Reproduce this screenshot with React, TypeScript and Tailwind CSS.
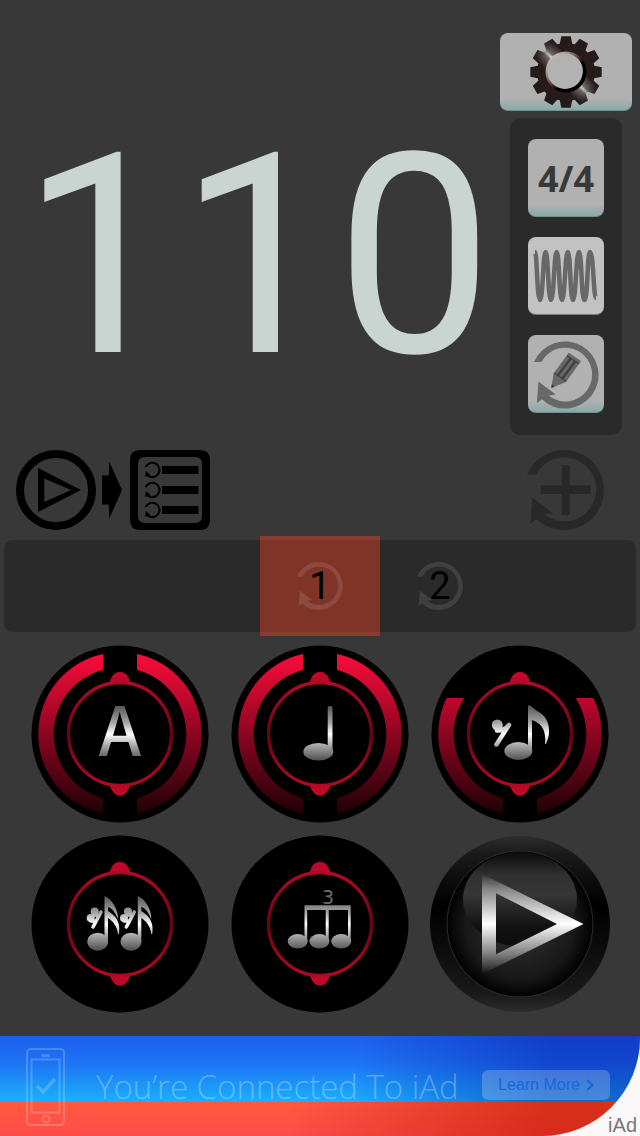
import { useId } from "react";
import type { ReactNode } from "react";

const LOOP_PATH =
  "M-36.9-15.5A40 40 0 1 1-27.6 29L-33.6 33.7L-31.6 7.7L-11 23.3L-19.6 24.5A32 32 0 1 0-28-15.5Z";

const GEAR_POINTS = Array.from({ length: 12 }, (_, i) => {
  const at = (radius: number, degrees: number) => {
    const a = ((i * 30 + degrees - 90) * Math.PI) / 180;
    return `${(radius * Math.cos(a)).toFixed(2)},${(radius * Math.sin(a)).toFixed(2)}`;
  };
  return [at(29, -12.5), at(36, -7.5), at(36, 7.5), at(29, 12.5)].join(" ");
}).join(" ");

function Gear() {
  return (
    <svg viewBox="-38 -39 76 77" className="h-[77px] w-[76px]" aria-hidden="true">
      <defs>
        <linearGradient id="gear-shine" gradientUnits="userSpaceOnUse" x1="9" y1="-9" x2="-9" y2="9">
          <stop offset="0" stopColor="#fff" stopOpacity="0" />
          <stop offset="0.4" stopColor="#fff" stopOpacity="0.4" />
          <stop offset="0.5" stopColor="#fff" stopOpacity="0.9" />
          <stop offset="0.6" stopColor="#fff" stopOpacity="0.4" />
          <stop offset="1" stopColor="#fff" stopOpacity="0" />
        </linearGradient>
        <radialGradient id="gear-fade" gradientUnits="userSpaceOnUse" cx="0" cy="0" r="36">
          <stop offset="0.5" stopColor="#fff" />
          <stop offset="0.75" stopColor="#bbb" />
          <stop offset="1" stopColor="#222" />
        </radialGradient>
        <mask id="gear-mask" maskUnits="userSpaceOnUse" x="-38" y="-38" width="76" height="76">
          <circle r="38" fill="url(#gear-fade)" />
        </mask>
        <linearGradient id="gear-rim" x1="0" y1="0" x2="1" y2="1">
          <stop offset="0" stopColor="#fff" />
          <stop offset="0.4" stopColor="#80594d" />
          <stop offset="0.6" stopColor="#000" />
        </linearGradient>
      </defs>
      <polygon points={GEAR_POINTS} fill="#261b1b" />
      <polygon points={GEAR_POINTS} fill="url(#gear-shine)" mask="url(#gear-mask)" />
      <circle r="20.500" fill="url(#gear-rim)" />
      <circle r="17.800" cx="-0.900" cy="-0.900" fill="#b2b2b2" />
    </svg>
  );
}

function Wave() {
  return (
    <svg viewBox="0 0 76 77" className="h-[77px] w-[76px]" fill="none" aria-hidden="true">
      <path
        d="M7 15C9 15 9 63 12 63S15 15 17.6 15S20 63 23 63S26 15 28.7 15S31 63 34 63S37 15 39.8 15S42 63 45 63S48 15 51 15S53 63 56.5 63S59 15 62 15C65.500 15 65.500 61 68 61"
        stroke="#686868"
        strokeWidth="4.500"
      />
    </svg>
  );
}

function Pencil() {
  return (
    <svg viewBox="-37 -40 76 77" className="h-[77px] w-[76px]" aria-hidden="true">
      <path d={LOOP_PATH} transform="scale(0.84)" fill="#686868" />
      <path d="M3.700-22.300L16-14L1 7L-13.700 13L-11.300-1.700Z" fill="#686868" />
      <path d="M2-19L14-11.300M-10.500-2L1 6.500" stroke="#404040" strokeWidth="1.200" />
      <path d="M6-17L-7.500 1M10.500-14L-3 4" stroke="#404040" strokeWidth="2.200" />
      <path d="M-13.700 13L-13.200 9.500L-10.500 11.500Z" fill="#303030" />
    </svg>
  );
}

function PlayList() {
  return (
    <svg viewBox="16 450 194 80" className="h-20 w-[194px]" aria-hidden="true">
      <circle cx="56" cy="490" r="36" fill="none" stroke="#000" strokeWidth="8" />
      <path
        fillRule="evenodd"
        d="M38 468L81 490L38 512ZM44.300 478.500V502L71 490Z"
      />
      <path d="M102 475.500H108.700L109.300 461.700L122 490L109.300 518.500L108.700 504.500H102Z" />
      <path
        fillRule="evenodd"
        d="M140 450H200Q210 450 210 460V520Q210 530 200 530H140Q130 530 130 520V460Q130 450 140 450ZM145 457Q138 457 138 464V516Q138 523 145 523H195Q202 523 202 516V464Q202 457 195 457Z"
      />
      {[470, 490, 510].map((y) => (
        <g key={y}>
          <path d={LOOP_PATH} transform={`translate(152.300 ${y}) scale(0.2)`} stroke="#000" strokeWidth="2.500" />
          <rect x="162" y={y - 4} width="36.500" height="8" />
        </g>
      ))}
    </svg>
  );
}

function LoopPlus() {
  return (
    <svg viewBox="-38 -40 78 80" className="h-20 w-[78px]" fill="#282828" aria-hidden="true">
      <path d={LOOP_PATH} />
      <path d="M-2.300-25H5.700V-4.700H26.700V4H5.700V25H-2.300V4H-23.300V-4.700H-2.300Z" />
    </svg>
  );
}

function ToolButton({ label, plain, children }: { label: string; plain?: boolean; children: ReactNode }) {
  const face = plain
    ? "bg-[#c2c2c2] border-b-[#71807f]"
    : "bg-linear-to-b from-[#b1b1b1] from-85% to-[#86aaaa] border-b-[#71908f]";
  return (
    <button
      type="button"
      aria-label={label}
      className={`flex min-h-[77px] w-full items-center justify-center overflow-hidden rounded-lg border-b ${face}`}
    >
      {children}
    </button>
  );
}

function Track({ number, selected }: { number: number; selected?: boolean }) {
  return (
    <button
      type="button"
      className={`relative -my-1 flex h-[100px] w-[120px] items-center justify-center ${
        selected ? "bg-[rgba(244,67,40,0.43)]" : ""
      }`}
    >
      <svg
        viewBox="-38 -40 80 80"
        className={`h-12 w-12 ${selected ? "fill-[#8d4a40]" : "fill-[#404040]"}`}
        aria-hidden="true"
      >
        <path d={LOOP_PATH} />
      </svg>
      <span className="absolute inset-0 text-center text-[38px] leading-[100px]">{number}</span>
    </button>
  );
}

type Level = "full" | "partial" | "off";

function Dial({ label, level, glyph }: { label: string; level: Level; glyph: (fill: string) => ReactNode }) {
  const id = useId().replace(/[^a-zA-Z0-9]/g, "");
  const metal = `url(#${id}m)`;
  const red = `url(#${id}r)`;
  return (
    <button type="button" aria-label={label} className="rounded-full">
      <svg viewBox="-90 -90 180 180" className="h-[180px] w-[180px]" aria-hidden="true">
        <defs>
          <linearGradient id={`${id}m`} gradientUnits="userSpaceOnUse" x1="0" y1="-27" x2="0" y2="25">
            <stop offset="0" stopColor="#5c5a5a" />
            <stop offset="0.3" stopColor="#a4a4a4" />
            <stop offset="0.52" stopColor="#fff" />
            <stop offset="0.74" stopColor="#a8a8a8" />
            <stop offset="1" stopColor="#595656" />
          </linearGradient>
          <linearGradient id={`${id}r`} gradientUnits="userSpaceOnUse" x1="0" y1="-80" x2="0" y2="80">
            <stop offset="0" stopColor="#fa0c3a" />
            <stop offset="1" stopColor="#1e0006" />
          </linearGradient>
          <linearGradient id={`${id}i`} gradientUnits="userSpaceOnUse" x1="0" y1="-54" x2="0" y2="54">
            <stop offset="0" stopColor="#b50927" />
            <stop offset="0.5" stopColor="#640416" />
            <stop offset="1" stopColor="#b50927" />
          </linearGradient>
          <clipPath id={`${id}c`}>
            <rect x="-90" y={level === "partial" ? -36 : -90} width="180" height="180" />
          </clipPath>
        </defs>
        <circle r="88.500" fill="#000" />
        {level !== "off" && (
          <g clipPath={`url(#${id}c)`} fill={red}>
            <path d="M-17-80A81.800 81.800 0 0 0-17 80V64A66.200 66.200 0 0 1-17-64Z" />
            <path d="M17-80A81.800 81.800 0 0 1 17 80V64A66.200 66.200 0 0 0 17-64Z" />
          </g>
        )}
        <path d="M-11-50C-9-55-8-62 0-62S9-55 11-50Z" fill="#bd0829" />
        <path d="M-11 50C-9 54-7 61.700 0 61.700S9 54 11 50Z" fill="#bd0829" />
        <circle r="51.500" fill="#000" stroke={`url(#${id}i)`} strokeWidth="3.400" />
        {glyph(metal)}
      </svg>
    </button>
  );
}

const letterA = (fill: string) => (
  <text
    x="0"
    y="22"
    textAnchor="middle"
    fill={fill}
    className="font-['Noto_Sans_CJK_SC',sans-serif] text-[68px] font-medium"
  >
    A
  </text>
);

const quarter = (fill: string) => (
  <g>
    <rect x="7.700" y="-28" width="4.800" height="46" rx="2" fill={fill} />
    <ellipse cx="-1.700" cy="17.700" rx="15" ry="8.800" fill={fill} />
  </g>
);

const eighth = (fill: string) => (
  <g>
    <ellipse cx="-1.700" cy="17" rx="14" ry="9" fill={fill} />
    <path
      d="M8 17V-28Q9-30 12-27C16-23 20-22 24-18C31-9 30 2 26 10H25C26-1 24-10 12-14V17Z"
      fill={fill}
    />
    <circle cx="-22.700" cy="-9" r="5.500" fill={fill} />
    <path d="M-23-3.500Q-16-3-11-9L-23.500 10.500" fill="none" stroke={fill} strokeWidth="4.500" strokeLinecap="round" strokeLinejoin="round" />
  </g>
);

const sixteenths = (fill: string) => (
  <g>
    {[0, 33.3].map((dx) => (
      <g key={dx} transform={`translate(${dx} 0)`} fill={fill}>
        <ellipse cx="-22.300" cy="17.700" rx="10.500" ry="9" />
        <path d="M-15.500 18V-28C-8-25-2-15-2-5C-5-12-8-16-12-17V-13C-6-9 1-4-1 10H-2C-3 2-7-3-12-6V18Z" />
        <circle cx="-25.300" cy="-12.500" r="4" />
        <circle cx="-29.300" cy="-6" r="4" />
        <path d="M-19-12L-27 3M-26-9L-21-9M-29-3L-24-3" fill="none" stroke={fill} strokeWidth="3.600" strokeLinecap="round" />
      </g>
    ))}
  </g>
);

const triplet = (fill: string) => (
  <g fill={fill}>
    <text x="8" y="-20" textAnchor="middle" fill="#6d6b6b" className="font-['DejaVu_Sans',sans-serif] text-[19px]">
      3
    </text>
    <path d="M-15.500-18.700H30.700V17H28V-14H8.700V17H5.700V-14H-12.800V17H-15.500Z" />
    {[-22.3, -0.6, 21.2].map((cx) => (
      <ellipse key={cx} cx={cx} cy="17.300" rx="10" ry="7.300" />
    ))}
  </g>
);

function PlayButton() {
  return (
    <button type="button" aria-label="Play" className="rounded-full">
      <svg viewBox="-90 -90 180 180" className="h-[180px] w-[180px]" aria-hidden="true">
        <defs>
          <linearGradient id="play-rim" x1="0" y1="0" x2="0" y2="1">
            <stop offset="0" stopColor="#2e2e2e" />
            <stop offset="0.1" stopColor="#1a1a1a" />
            <stop offset="0.4" stopColor="#000" />
            <stop offset="0.9" stopColor="#1a1a1a" />
            <stop offset="1" stopColor="#2c2c2c" />
          </linearGradient>
          <radialGradient id="play-face">
            <stop offset="0.4" stopColor="#242424" />
            <stop offset="0.75" stopColor="#181818" />
            <stop offset="1" stopColor="#000" />
          </radialGradient>
          <linearGradient id="play-gloss" x1="0" y1="0" x2="0" y2="1">
            <stop offset="0" stopColor="#0c0c0c" />
            <stop offset="0.25" stopColor="#303030" />
            <stop offset="0.45" stopColor="#363636" />
            <stop offset="0.8" stopColor="#111" />
            <stop offset="1" stopColor="#0d0d0d" />
          </linearGradient>
          <linearGradient id="play-metal" x1="0" y1="0" x2="0" y2="1">
            <stop offset="0" stopColor="#8a8a8a" stopOpacity="0" />
            <stop offset="0.15" stopColor="#858585" />
            <stop offset="0.5" stopColor="#fff" />
            <stop offset="0.8" stopColor="#7e7e7e" />
            <stop offset="1" stopColor="#777" stopOpacity="0" />
          </linearGradient>
        </defs>
        <ellipse rx="90" ry="88" fill="url(#play-rim)" />
        <circle r="73" fill="url(#play-face)" stroke="#2c2c2c" strokeWidth="1" />
        <ellipse cy="-25" rx="57" ry="47" fill="url(#play-gloss)" />
        <path
          fillRule="evenodd"
          fill="url(#play-metal)"
          d="M-38-50L63.500 0L-38 50ZM-24-30.700V30.300L37 0Z"
        />
      </svg>
    </button>
  );
}

function AdBanner() {
  return (
    <aside className="relative mt-auto h-[100px] bg-[#fbf8f9]">
      <div className="relative h-full overflow-hidden rounded-br-[98px]">
        <div className="absolute inset-0 flex flex-col" aria-hidden="true">
          <div className="h-[66px] bg-[linear-gradient(100deg,transparent_55%,rgba(0,10,150,0.42)_85%),linear-gradient(#1d5fec,#1d73f4_40%,#1bb0fb)]" />
          <div className="flex-1 bg-[linear-gradient(100deg,transparent_45%,rgba(190,20,0,0.6)_85%),linear-gradient(#ff593f,#ff4c4a)]" />
        </div>
        <div className="relative flex h-full items-center pt-0.5 pr-[30px] pl-[26px]">
          <svg viewBox="0 0 39 78" className="h-[78px] w-[39px]" fill="none" stroke="#fff" strokeOpacity="0.2" strokeWidth="2" aria-hidden="true">
            <rect x="1" y="1" width="37" height="76" rx="4" />
            <rect x="5.500" y="11.500" width="28" height="53" />
            <rect x="15" y="6" width="9" height="3" rx="1.500" fill="#fff" fillOpacity="0.2" stroke="none" />
            <circle cx="20" cy="71" r="3.500" />
            <path d="M11 38L17 44L29 31" strokeWidth="3.500" />
          </svg>
          <p className="ml-[31px] flex-1 font-['Open_Sans',sans-serif] text-[33px] leading-10 font-light whitespace-nowrap text-white/30">
            You’re Connected To iAd
          </p>
          <a
            href="#learn-more"
            className="mb-1 flex h-[30px] w-32 shrink-0 items-center justify-center gap-1.5 rounded-md bg-white/22 font-['Liberation_Sans',sans-serif] text-base text-[#1767dc]"
          >
            Learn More
            <svg viewBox="0 0 8 12" className="h-3 w-2" fill="none" stroke="currentColor" strokeWidth="2" aria-hidden="true">
              <path d="M1 1L6.500 6L1 11" />
            </svg>
          </a>
        </div>
      </div>
      <span className="absolute right-[3px] bottom-0 font-['Liberation_Sans',sans-serif] text-xl leading-[22px] text-[#777]">
        iAd
      </span>
    </aside>
  );
}

export default function App() {
  return (
    <main className="flex min-h-screen flex-col bg-[#383838] font-[Roboto,sans-serif] text-black">
      <section className="flex">
        <div className="flex-1 pt-[116px] pl-3.5 text-center text-[280px] leading-[280px] text-[#cad5d1]">110</div>
        <div className="mr-2 w-[132px] pt-[33px]">
          <ToolButton label="Settings">
            <Gear />
          </ToolButton>
          <div className="mx-2.5 mt-[7px] flex flex-col gap-5 rounded-[10px] bg-[#2a2a2a] px-[18px] pt-[21px] pb-[22px] shadow-[0_0_0_4px_#3a3737]">
            <ToolButton label="Time signature 4/4">
              <span className="h-[77px] font-['Noto_Sans',sans-serif] text-4xl leading-[79px] font-bold text-[#383838]">
                4/4
              </span>
            </ToolButton>
            <ToolButton label="Waveform" plain>
              <Wave />
            </ToolButton>
            <ToolButton label="Edit loop">
              <Pencil />
            </ToolButton>
          </div>
        </div>
      </section>

      <section className="mt-[15px] flex justify-between pr-9 pl-4">
        <button type="button" aria-label="Play list">
          <PlayList />
        </button>
        <button type="button" aria-label="Add loop">
          <LoopPlus />
        </button>
      </section>

      <section className="mt-1.5 grid grid-cols-[1fr_120px_1fr] rounded-xl border-4 border-[#3a3737] bg-[#2a2a2a] bg-clip-padding">
        <div className="col-start-2">
          <Track number={1} selected />
        </div>
        <Track number={2} />
      </section>

      <section className="mt-[3px] mb-4 grid grid-cols-3 justify-items-center gap-y-[10px] px-5 pt-[5px]">
        <Dial label="Accent" level="full" glyph={letterA} />
        <Dial label="Quarter notes" level="full" glyph={quarter} />
        <Dial label="Eighth notes" level="partial" glyph={eighth} />
        <Dial label="Sixteenth notes" level="off" glyph={sixteenths} />
        <Dial label="Triplets" level="off" glyph={triplet} />
        <PlayButton />
      </section>

      <AdBanner />
    </main>
  );
}
